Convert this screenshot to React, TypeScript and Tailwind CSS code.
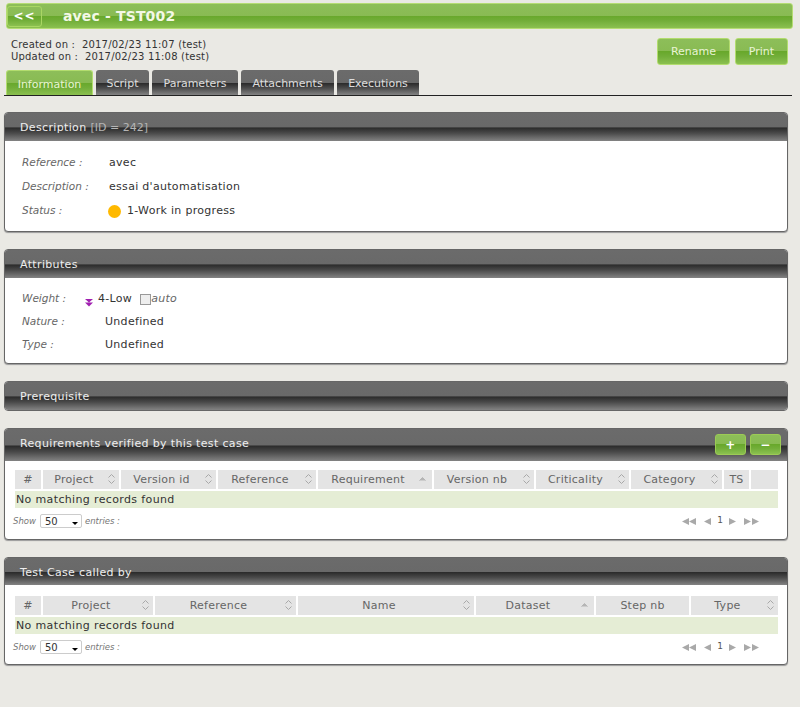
const font = 'font-["DejaVu_Sans",Verdana,sans-serif]'

const greenBar = 'bg-[linear-gradient(#8dbe59_0%,#89bb53_48%,#68a82b_50%,#72ae39_70%,#8bc050_100%)]'
const darkBar = 'bg-[linear-gradient(#6b6b6b_0%,#696969_50%,#2b2b2b_53%,#4a4a4a_72%,#838383_100%)]'

function SortIcon({ up = true, down = true }: { up?: boolean; down?: boolean }) {
  return (
    <svg width="9" height="12" viewBox="0 0 9 12" className="shrink-0">
      {up && <path d="M1.5 4.5 L4.5 1.5 L7.5 4.5" fill={down ? 'none' : '#b5b5b5'} stroke={down ? '#a8a8a8' : '#b5b5b5'} strokeWidth="1" />}
      {down && <path d="M1.5 7.5 L4.5 10.5 L7.5 7.5" fill="none" stroke="#a8a8a8" strokeWidth="1" />}
    </svg>
  )
}

function Tri({ dir }: { dir: 'l' | 'r' }) {
  return (
    <svg width="7" height="7" viewBox="0 0 7 7" className="shrink-0">
      <path d={dir === 'l' ? 'M0 3.5 L7 0 L7 7 Z' : 'M0 0 L7 3.5 L0 7 Z'} fill="#a9a9a9" />
    </svg>
  )
}

function Panel({ title, extra, actions, headH = 'h-[28px]', children }: { title: string; extra?: string; actions?: React.ReactNode; headH?: string; children?: React.ReactNode }) {
  const open = !!children
  return (
    <section className={`mx-1 w-[784px] rounded-[4px] border border-[#666] bg-white ${open ? 'shadow-[0_1px_1px_#999]' : ''}`}>
      <div className={`relative flex ${headH} items-start pl-[15px] pt-[8px] text-[11px] leading-[14px] tracking-[0.35px] text-[#eee] ${darkBar} ${open ? 'rounded-t-[3px]' : 'rounded-[3px]'}`}>
        <span>{title}</span>
        {extra && <span className="ml-1 tracking-normal text-[#b5b5b5]">{extra}</span>}
        {actions}
      </div>
      {children}
    </section>
  )
}

function Field({ label, children, labelW = 'w-[87px]' }: { label: string; children: React.ReactNode; labelW?: string }) {
  return (
    <div className="flex h-[23px] items-center text-[11px] tracking-[0.3px] text-[#333]">
      <span className={`${labelW} shrink-0 pb-[2px] text-[10.5px] italic tracking-normal text-[#666]`}>{label}</span>
      {children}
    </div>
  )
}

function HeadCell({ label, sort = 'both', center = false }: { label?: string; sort?: 'both' | 'up' | 'none'; center?: boolean }) {
  return (
    <div className="relative flex h-[19px] items-center justify-center bg-[#e4e4e4] pt-[1px] text-[11px] tracking-[0.25px] text-[#666]">
      <span className={center ? '' : 'pr-[14px]'}>{label}</span>
      {sort === 'both' && <span className="absolute right-[3px] top-[3px]"><SortIcon /></span>}
      {sort === 'up' && <span className="absolute right-[5px] top-[6px]"><SortIcon down={false} /></span>}
    </div>
  )
}

function Footer() {
  return (
    <div className="ml-[-2px] flex h-[26px] items-center justify-between pr-[19px]">
      <div className="flex items-center text-[8.5px] italic text-[#777]">
        <span>Show</span>
        <div className="relative ml-[4px] mr-[3px] flex h-[14px] w-[42px] items-center rounded-[2px] border border-[#ccc] bg-white pl-[4px] text-[10px] not-italic text-[#333]">
          50
          <span className="absolute right-[3px] top-[7px] h-0 w-0 border-x-[3px] border-t-[3px] border-x-transparent border-t-black" />
        </div>
        <span>entries :</span>
      </div>
      <div className="flex items-center text-[9px] text-[#555]">
        <span className="flex"><Tri dir="l" /><Tri dir="l" /></span>
        <span className="ml-[8px]"><Tri dir="l" /></span>
        <span className="mx-[6px]">1</span>
        <span className="mr-[8px]"><Tri dir="r" /></span>
        <span className="flex gap-[1px]"><Tri dir="r" /><Tri dir="r" /></span>
      </div>
    </div>
  )
}

function NoRecords() {
  return (
    <div className="mt-[2px] flex h-[17px] items-center bg-[#e5edd5] pl-[1px] pt-[1px] text-[11px] tracking-[0.36px] text-[#333]">
      No matching records found
    </div>
  )
}

export default function App() {
  return (
    <div className={`min-h-[707px] bg-[#eae9e4] pt-[3px] ${font}`}>
      <header className={`ml-[6px] flex h-[26px] w-[787px] items-center rounded-[3px] border border-[#b5dc74] ${greenBar}`}>
        <button className={`h-[21px] w-[35px] rounded-[3px] border border-[#a9d663] text-[12px] font-bold tracking-[1px] text-white ${greenBar}`}>&lt;&lt;</button>
        <h1 className="ml-[21px] text-[14px] font-bold tracking-[0.15px] text-[#f3f8e6]">avec - TST002</h1>
      </header>

      <div className="flex h-[41px] items-start justify-between pt-[9px] pl-[11px] pr-[12px]">
        <div className="pt-[1px] text-[10px] leading-[12px] tracking-[0.2px] text-[#333]">
          <p>Created on :&nbsp; 2017/02/23 11:07 (test)</p>
          <p>Updated on :&nbsp; 2017/02/23 11:08 (test)</p>
        </div>
        <div className="flex gap-[5px]">
          <button className={`h-[27px] w-[73px] rounded-[3px] border border-[#b2dc6e] pt-[2px] text-[11px] text-[#e8f3d4] ${greenBar}`}>Rename</button>
          <button className={`h-[27px] w-[53px] rounded-[3px] border border-[#b2dc6e] pt-[2px] text-[11px] text-[#e8f3d4] ${greenBar}`}>Print</button>
        </div>
      </div>

      <nav className="ml-[4px] mr-[8px] flex h-[26px] gap-[3px] border-b border-[#222] pl-[2px]">
        <div className={`flex h-[25px] w-[87px] items-center justify-center rounded-t-[3px] border border-b-0 border-[#b2dc6e] pt-[4px] text-[11px] text-[#e8f3d4] ${greenBar}`}>Information</div>
        {[
          ['Script', 'w-[53px]'],
          ['Parameters', 'w-[86px]'],
          ['Attachments', 'w-[93px]'],
          ['Executions', 'w-[82px]'],
        ].map(([t, w]) => (
          <div key={t} className={`flex h-[25px] ${w} items-center justify-center rounded-t-[3px] pt-[4px] text-[11px] text-[#ddd] ${darkBar}`}>{t}</div>
        ))}
      </nav>

      <div className="mt-[16px] flex flex-col gap-[17px]">
        <Panel title="Description" extra="[ID = 242]">
          <div className="h-[90px] pl-[17px] pt-[11px]">
            <Field label="Reference :"><span>avec</span></Field>
            <div className="h-[1px]" />
            <Field label="Description :"><span>essai d'automatisation</span></Field>
            <div className="h-[1px]" />
            <Field label="Status :">
              <span className="mr-[6px] ml-[-1px] h-[13px] w-[13px] rounded-full bg-[#ffb900]" />
              <span>1-Work in progress</span>
            </Field>
          </div>
        </Panel>

        <Panel title="Attributes">
          <div className="h-[85px] pl-[17px] pt-[10px]">
            <Field label="Weight :" labelW="w-[63px]">
              <svg width="8" height="9" viewBox="0 0 8 9" className="mr-[5px] mt-[5px]">
                <path d="M0 1 H8 L4 4.5 Z M0 4.5 H8 L4 8.5 Z" fill="#a020b0" />
              </svg>
              <span>4-Low</span>
              <span className="ml-[8px] h-[11px] w-[11px] border border-[#999] bg-[#eee]" />
              <span className="italic text-[#666]">auto</span>
            </Field>
            <Field label="Nature :"><span className="ml-[-4px]">Undefined</span></Field>
            <Field label="Type  :"><span className="ml-[-4px]">Undefined</span></Field>
          </div>
        </Panel>

        <Panel title="Prerequisite" />

        <Panel
          title="Requirements verified by this test case"
          headH="h-[32px]"
          actions={
            <div className="absolute right-[6px] top-[5px] flex gap-[4px]">
              <button className={`h-[21px] w-[31px] rounded-[3px] border border-[#9ccb55] text-[12px] font-bold leading-none text-white ${greenBar}`}>+</button>
              <button className={`h-[21px] w-[31px] rounded-[3px] border border-[#9ccb55] text-[12px] font-bold leading-none text-white ${greenBar}`}>−</button>
            </div>
          }
        >
          <div className="h-[78px] pl-[10px] pr-[9px] pt-[9px]">
            <div className="grid grid-cols-[26px_76px_95px_98px_114px_100px_93px_91px_25px_27px] gap-x-[2px]">
              <HeadCell label="#" sort="none" center />
              <HeadCell label="Project" />
              <HeadCell label="Version id" />
              <HeadCell label="Reference" />
              <HeadCell label="Requirement" sort="up" />
              <HeadCell label="Version nb" />
              <HeadCell label="Criticality" />
              <HeadCell label="Category" />
              <HeadCell label="TS" sort="none" center />
              <HeadCell sort="none" center />
            </div>
            <NoRecords />
            <Footer />
          </div>
        </Panel>

        <Panel title="Test Case called by" headH="h-[27px]">
          <div className="h-[79px] pl-[10px] pr-[9px] pt-[11px]">
            <div className="grid grid-cols-[26px_110px_141px_176px_118px_93px_87px] gap-x-[2px]">
              <HeadCell label="#" sort="none" center />
              <HeadCell label="Project" />
              <HeadCell label="Reference" />
              <HeadCell label="Name" />
              <HeadCell label="Dataset" sort="up" />
              <HeadCell label="Step nb" sort="none" center />
              <HeadCell label="Type" />
            </div>
            <NoRecords />
            <Footer />
          </div>
        </Panel>
      </div>
    </div>
  )
}
